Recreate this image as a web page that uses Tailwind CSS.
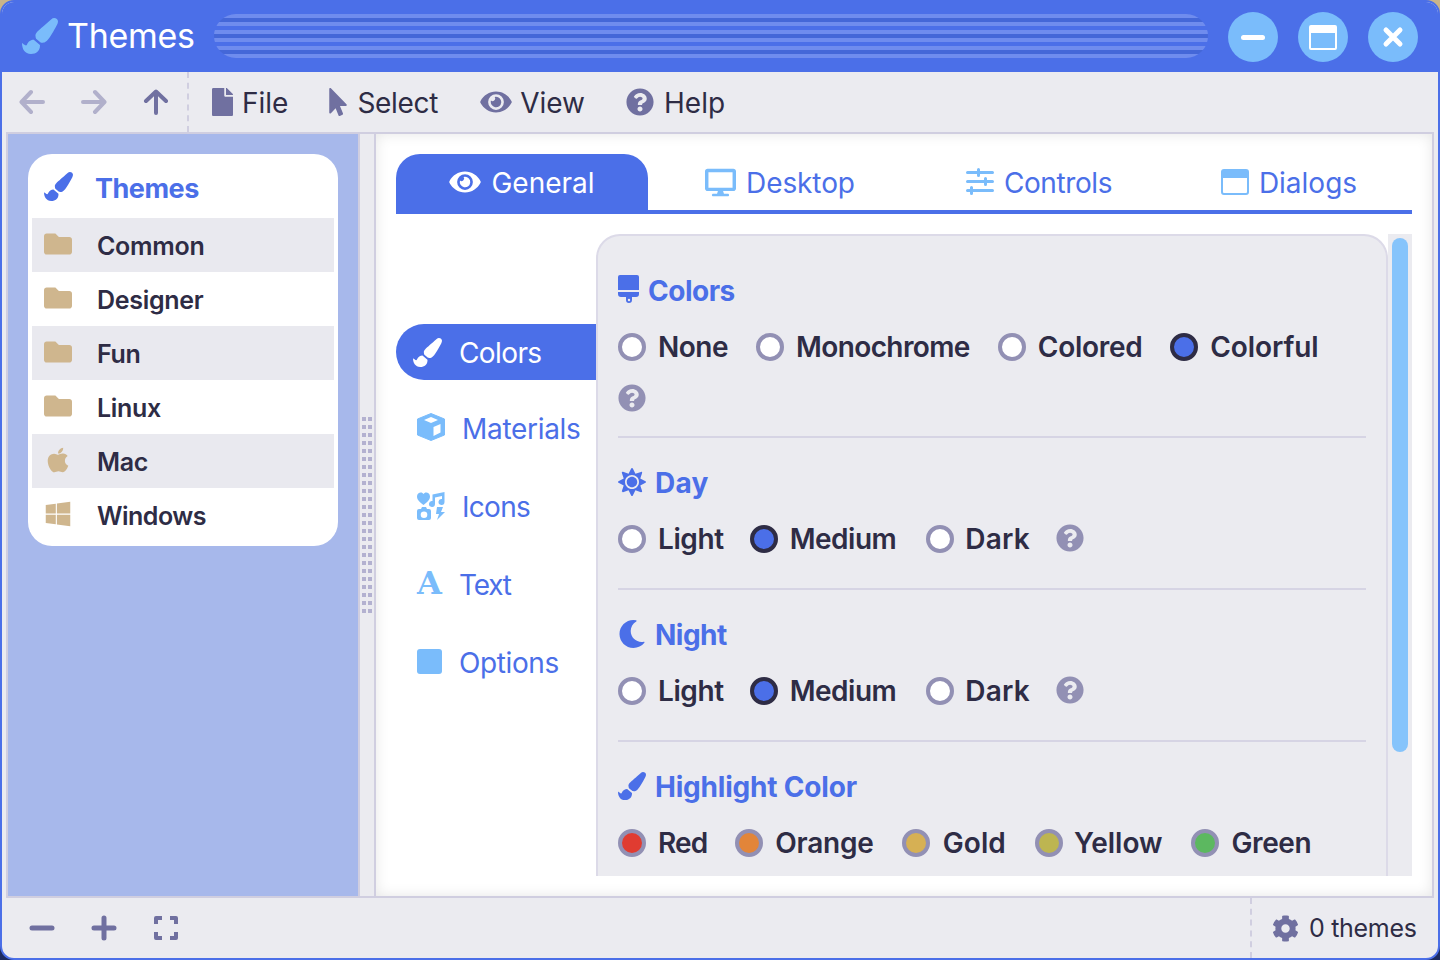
<!DOCTYPE html>
<html lang="en">
<head>
  <meta charset="UTF-8">
  <title>Themes</title>
  <script src="https://cdn.jsdelivr.net/npm/@tailwindcss/browser@4"></script>
</head>
<body class="w-[1440px] h-[960px] overflow-hidden bg-[linear-gradient(#c9b48a_50%,#1c2a5e_50%)] font-[family-name:Inter,sans-serif] text-[#2e2c45]">
  <div class="w-[1440px] h-[960px] flex flex-col border-2 border-[#4b6fe8] rounded-[14px] overflow-hidden bg-[#ebebf0]">

    <!-- Title bar -->
    <header class="h-[72px] shrink-0 bg-[#4b6fe8] flex items-start -mt-[2px]">
      <svg class="w-[36px] h-[36px] ml-[20px] mt-[18px]" viewBox="0 0 512 512" fill="#7abcfb"><path d="M167.02 309.34c-40.12 2.58-76.53 17.86-97.19 72.3-2.35 6.21-8 9.98-14.59 9.98-11.11 0-45.46-27.67-55.25-34.35C0 439.62 37.93 512 128 512c75.86 0 128-43.77 128-120.19 0-3.11-.65-6.08-.97-9.13l-88.01-73.34zM457.89 0c-15.16 0-29.37 6.71-40.21 16.45C213.27 199.05 192 203.34 192 257.09c0 13.7 3.25 26.76 8.73 38.7l63.82 53.18c7.21 1.8 14.64 3.03 22.39 3.03 62.11 0 98.11-45.47 211.16-256.46 7.38-14.35 13.9-29.85 13.9-45.99C512 20.64 486 0 457.89 0z"/></svg>
      <span class="w-[147px] ml-[9px] mt-[14px] text-[34px] leading-[44px] text-white tracking-[-0.3px]">Themes</span>
      <div class="w-[994px] h-[44px] mt-[14px] rounded-[22px] bg-[repeating-linear-gradient(#6f8cee_0px,#6f8cee_4px,#4467d8_4px,#4467d8_8px,#6f8cee_8px,#6f8cee_12px,#4b6fe8_12px,#4b6fe8_16px)]"></div>
      <div class="ml-auto mr-[20px] mt-[12px] flex gap-[20px]">
        <button class="w-[50px] h-[50px] rounded-full bg-[#7abcfb] flex items-center justify-center">
          <span class="block w-[24px] h-[5px] rounded-full bg-white"></span>
        </button>
        <button class="w-[50px] h-[50px] rounded-full bg-[#7abcfb] flex items-center justify-center">
          <span class="block w-[28px] h-[25px] rounded-[2px] border-[2.5px] border-t-[8px] border-white"></span>
        </button>
        <button class="w-[50px] h-[50px] rounded-full bg-[#7abcfb] flex items-center justify-center">
          <svg class="w-[22px] h-[22px]" viewBox="0 0 22 22" fill="none" stroke="#fff" stroke-width="5" stroke-linecap="round"><path d="M4 4l14 14M18 4L4 18"/></svg>
        </button>
      </div>
    </header>

    <!-- Toolbar -->
    <nav class="h-[60px] shrink-0 flex items-center text-[28px]">
      <div class="w-[187px] h-full flex items-center border-r-2 border-dashed border-[#d0cee0]">
        <svg class="w-[26px] h-[26px] ml-[17px]" viewBox="0 0 26 26" fill="none" stroke="#b1b0cb" stroke-width="4" stroke-linecap="round" stroke-linejoin="round"><path d="M24 13H3M12 3L2.500 13 12 23"/></svg>
        <svg class="w-[26px] h-[26px] ml-[36px]" viewBox="0 0 26 26" fill="none" stroke="#b1b0cb" stroke-width="4" stroke-linecap="round" stroke-linejoin="round"><path d="M2 13h21M14 3l9.500 10L14 23"/></svg>
        <svg class="w-[26px] h-[26px] ml-[36px]" viewBox="0 0 26 26" fill="none" stroke="#7070a0" stroke-width="4" stroke-linecap="round" stroke-linejoin="round"><path d="M13 24V3M3 12l10-9.500L23 12"/></svg>
      </div>
      <svg class="w-[21px] h-[28px] ml-[23px]" viewBox="0 0 384 512" fill="#7070a0"><path d="M224 136V0H24C10.7 0 0 10.7 0 24v464c0 13.3 10.7 24 24 24h336c13.3 0 24-10.700 24-24V160H248c-13.200 0-24-10.800-24-24zm160-14.100v6.100H256V0h6.100c6.400 0 12.500 2.500 17 7l97.900 98c4.500 4.500 7 10.600 7 16.900z"/></svg>
      <span class="ml-[9px] pt-[2px]">File</span>
      <svg class="w-[18px] h-[28px] ml-[41px]" viewBox="0 0 320 512" fill="#7070a0"><path d="M302.189 329.126H196.105l55.831 135.993c3.889 9.428-.555 19.999-9.444 23.999l-49.165 21.427c-9.165 4-19.443-.571-23.332-9.714l-53.053-129.136-86.664 89.138C18.729 472.71 0 463.554 0 447.977V18.299C0 1.899 19.921-6.096 30.277 5.443l284.412 292.542c11.472 11.179 3.007 31.141-12.5 31.141z"/></svg>
      <span class="ml-[10px] pt-[2px] tracking-[-0.3px]">Select</span>
      <svg class="w-[32px] h-[28px] ml-[42px]" viewBox="0 0 576 512" fill="#7070a0"><path d="M572.52 241.4C518.29 135.59 410.93 64 288 64S57.68 135.64 3.48 241.41a32.35 32.35 0 0 0 0 29.19C57.71 376.41 165.07 448 288 448s230.32-71.64 284.52-177.41a32.35 32.35 0 0 0 0-29.19zM288 400a144 144 0 1 1 144-144 143.93 143.93 0 0 1-144 144zm0-240a95.31 95.31 0 0 0-25.31 3.79 47.85 47.85 0 0 1-66.9 66.9A95.78 95.78 0 1 0 288 160z"/></svg>
      <span class="ml-[8px] pt-[2px]">View</span>
      <svg class="w-[28px] h-[28px] ml-[41px]" viewBox="0 0 512 512" fill="#7070a0"><path d="M504 256c0 136.997-111.043 248-248 248S8 392.997 8 256C8 119.083 119.043 8 256 8s248 111.083 248 248zM262.655 90c-54.497 0-89.255 22.957-116.549 63.758-3.536 5.286-2.353 12.415 2.715 16.258l34.699 26.31c5.205 3.947 12.621 3.008 16.665-2.122 17.864-22.658 30.113-35.797 57.303-35.797 20.429 0 45.698 13.148 45.698 32.958 0 14.976-12.363 22.667-32.534 33.976C247.128 238.528 216 254.941 216 296v4c0 6.627 5.373 12 12 12h56c6.627 0 12-5.373 12-12v-1.333c0-28.462 83.186-29.647 83.186-106.667 0-58.002-60.165-102-116.531-102zM256 338c-25.365 0-46 20.635-46 46 0 25.364 20.635 46 46 46s46-20.636 46-46c0-25.365-20.635-46-46-46z"/></svg>
      <span class="ml-[10px] pt-[2px]">Help</span>
    </nav>

    <!-- Main -->
    <main class="h-[766px] shrink-0 mx-[4px] border-2 border-[#d0cee0] flex">

      <!-- Sidebar -->
      <aside class="w-[350px] shrink-0 bg-[#a7b8eb] pt-[20px] pl-[20px]">
        <div class="w-[310px] h-[392px] bg-white rounded-[24px] px-[4px] text-[25px] font-semibold tracking-[-0.3px]">
          <div class="h-[64px] flex items-center text-[27px] font-bold text-[#4b6fe8] tracking-[-0.5px]">
            <svg class="w-[29px] h-[29px] ml-[12px]" viewBox="0 0 512 512" fill="#4b6fe8"><path d="M167.02 309.34c-40.12 2.58-76.53 17.86-97.19 72.3-2.35 6.21-8 9.98-14.59 9.98-11.11 0-45.46-27.67-55.25-34.35C0 439.62 37.93 512 128 512c75.86 0 128-43.77 128-120.19 0-3.11-.65-6.08-.97-9.13l-88.01-73.34zM457.89 0c-15.16 0-29.37 6.71-40.21 16.45C213.27 199.05 192 203.34 192 257.09c0 13.7 3.25 26.76 8.73 38.7l63.82 53.18c7.21 1.8 14.64 3.03 22.39 3.03 62.11 0 98.11-45.47 211.16-256.46 7.38-14.35 13.9-29.85 13.9-45.99C512 20.64 486 0 457.89 0z"/></svg>
            <span class="ml-[22px] pt-[6px]">Themes</span>
          </div>
          <div class="h-[54px] flex items-center bg-[#e9e9ef]">
            <svg class="w-[28px] h-[28px] ml-[12px] -mt-[3px]" viewBox="0 0 512 512" fill="#cfb68e"><path d="M464 128H272l-64-64H48C21.49 64 0 85.49 0 112v288c0 26.51 21.49 48 48 48h416c26.51 0 48-21.49 48-48V176c0-26.51-21.49-48-48-48z"/></svg>
            <span class="ml-[25px] pt-[3px]">Common</span>
          </div>
          <div class="h-[54px] flex items-center">
            <svg class="w-[28px] h-[28px] ml-[12px] -mt-[3px]" viewBox="0 0 512 512" fill="#cfb68e"><path d="M464 128H272l-64-64H48C21.49 64 0 85.49 0 112v288c0 26.51 21.49 48 48 48h416c26.51 0 48-21.49 48-48V176c0-26.51-21.49-48-48-48z"/></svg>
            <span class="ml-[25px] pt-[3px]">Designer</span>
          </div>
          <div class="h-[54px] flex items-center bg-[#e9e9ef]">
            <svg class="w-[28px] h-[28px] ml-[12px] -mt-[3px]" viewBox="0 0 512 512" fill="#cfb68e"><path d="M464 128H272l-64-64H48C21.49 64 0 85.49 0 112v288c0 26.51 21.49 48 48 48h416c26.51 0 48-21.49 48-48V176c0-26.51-21.49-48-48-48z"/></svg>
            <span class="ml-[25px] pt-[3px]">Fun</span>
          </div>
          <div class="h-[54px] flex items-center">
            <svg class="w-[28px] h-[28px] ml-[12px] -mt-[3px]" viewBox="0 0 512 512" fill="#cfb68e"><path d="M464 128H272l-64-64H48C21.49 64 0 85.49 0 112v288c0 26.51 21.49 48 48 48h416c26.51 0 48-21.49 48-48V176c0-26.51-21.49-48-48-48z"/></svg>
            <span class="ml-[25px] pt-[3px]">Linux</span>
          </div>
          <div class="h-[54px] flex items-center bg-[#e9e9ef]">
            <svg class="w-[24px] h-[28px] ml-[14px] mr-[2px] -mt-[3px]" viewBox="0 0 384 512" fill="#cfb68e"><path d="M318.7 268.7c-.2-36.7 16.4-64.4 50-84.8-18.8-26.9-47.2-41.7-84.7-44.6-35.5-2.8-74.3 20.7-88.5 20.7-15 0-49.4-19.7-76.4-19.7C63.3 141.2 4 184.8 4 273.5q0 39.3 14.4 81.2c12.8 36.7 59 126.7 107.2 125.2 25.2-.6 43-17.9 75.8-17.9 31.8 0 48.3 17.9 76.4 17.9 48.6-.7 90.4-82.5 102.6-119.3-65.2-30.7-61.7-90-61.7-91.900zm-56.6-164.2c27.3-32.4 24.8-61.9 24-72.5-24.1 1.4-52 16.4-67.9 34.9-17.5 19.8-27.8 44.3-25.6 71.9 26.1 2 49.9-11.4 69.5-34.3z"/></svg>
            <span class="ml-[25px] pt-[3px]">Mac</span>
          </div>
          <div class="h-[54px] flex items-center">
            <svg class="w-[26px] h-[28px] ml-[13px] mr-[1px] -mt-[3px]" viewBox="0 0 448 512" fill="#cfb68e"><path d="M0 93.7l183.6-25.3v177.4H0V93.7zm0 324.6l183.6 25.3V268.4H0v149.9zm203.8 28L448 480V268.4H203.8v177.9zm0-380.6v180.1H448V32L203.8 65.7z"/></svg>
            <span class="ml-[25px] pt-[3px] tracking-[-0.5px]">Windows</span>
          </div>
        </div>
      </aside>

      <!-- Splitter -->
      <div class="w-[18px] shrink-0 border-x-2 border-[#d0cee0] flex items-center justify-center gap-[2px]">
        <div class="w-[4px] h-[196px] bg-[linear-gradient(#b3b1d0_50%,transparent_50%)] bg-[length:4px_8px]"></div>
        <div class="w-[4px] h-[196px] bg-[linear-gradient(#b3b1d0_50%,transparent_50%)] bg-[length:4px_8px]"></div>
      </div>

      <!-- Content -->
      <section class="flex-1 bg-white shadow-[inset_0_0_14px_rgba(0,0,0,0.10)] pt-[20px] px-[20px]">
        <div class="h-[60px] flex border-b-4 border-[#4b6fe8] text-[28px] text-[#4b6fe8]">
          <div class="w-[252px] h-[60px] rounded-t-[24px] bg-[#4b6fe8] text-white flex items-center justify-center gap-[10px] pb-[4px]">
            <svg class="w-[32px] h-[28px]" viewBox="0 0 576 512" fill="#fff"><path d="M572.52 241.4C518.29 135.59 410.93 64 288 64S57.68 135.64 3.48 241.41a32.35 32.35 0 0 0 0 29.19C57.71 376.41 165.07 448 288 448s230.32-71.64 284.52-177.41a32.35 32.35 0 0 0 0-29.19zM288 400a144 144 0 1 1 144-144 143.93 143.93 0 0 1-144 144zm0-240a95.31 95.31 0 0 0-25.31 3.79 47.85 47.85 0 0 1-66.9 66.9A95.78 95.78 0 1 0 288 160z"/></svg>
            <span class="pt-[2px]">General</span>
          </div>
          <div class="w-[264px] flex items-center justify-center gap-[10px]">
            <svg class="w-[31px] h-[29px]" viewBox="0 0 576 512" fill="#7abcfb"><path d="M528 0H48C21.500 0 0 21.500 0 48v320c0 26.500 21.500 48 48 48h192l-16 48h-72c-13.300 0-24 10.700-24 24s10.700 24 24 24h272c13.300 0 24-10.700 24-24s-10.700-24-24-24h-72l-16-48h192c26.500 0 48-21.500 48-48V48c0-26.500-21.500-48-48-48zm-16 352H64V64h448v288z"/></svg>
            <span class="pt-[2px] tracking-[-0.1px]">Desktop</span>
          </div>
          <div class="w-[252px] pl-[2px] flex items-center justify-center gap-[10px]">
            <svg class="w-[28px] h-[28px]" viewBox="0 0 28 28" fill="#7abcfb"><path d="M0 4.500a1.500 1.500 0 0 1 1.500-1.500H11V1.500a1.500 1.500 0 0 1 3 0V3h12.500a1.500 1.500 0 0 1 0 3H14v1.500a1.500 1.500 0 0 1-3 0V6H1.500A1.500 1.500 0 0 1 0 4.500zM0 13.500A1.500 1.500 0 0 1 1.500 12H18v-1.500a1.500 1.500 0 0 1 3 0V12h5.500a1.500 1.500 0 0 1 0 3H21v1.500a1.500 1.500 0 0 1-3 0V15H1.500A1.500 1.500 0 0 1 0 13.500zM0 22.500A1.500 1.500 0 0 1 1.500 21H4v-1.500a1.500 1.500 0 0 1 3 0V21h19.500a1.500 1.500 0 0 1 0 3H7v1.500a1.500 1.500 0 0 1-3 0V24H1.500A1.500 1.500 0 0 1 0 22.500z"/></svg>
            <span class="pt-[2px] tracking-[-0.4px]">Controls</span>
          </div>
          <div class="w-[248px] pl-[2px] flex items-center justify-center gap-[10px]">
            <span class="block w-[28px] h-[26px] rounded-[3px] border-[2.5px] border-t-[9px] border-[#7abcfb]"></span>
            <span class="pt-[2px]">Dialogs</span>
          </div>
        </div>

        <div class="flex mt-[20px]">
          <!-- Nav -->
          <div class="w-[200px] shrink-0 pt-[90px] text-[28px] text-[#4b6fe8]">
            <div class="h-[56px] rounded-l-[28px] bg-[#4b6fe8] text-white flex items-center">
              <svg class="w-[29px] h-[29px] ml-[17px]" viewBox="0 0 512 512" fill="#fff"><path d="M167.02 309.34c-40.12 2.58-76.53 17.86-97.19 72.3-2.35 6.21-8 9.98-14.59 9.98-11.11 0-45.46-27.67-55.25-34.35C0 439.62 37.93 512 128 512c75.86 0 128-43.77 128-120.19 0-3.11-.65-6.08-.97-9.13l-88.01-73.34zM457.89 0c-15.16 0-29.37 6.71-40.21 16.45C213.27 199.05 192 203.34 192 257.09c0 13.7 3.25 26.76 8.73 38.7l63.82 53.18c7.21 1.8 14.64 3.03 22.39 3.03 62.11 0 98.11-45.47 211.16-256.46 7.38-14.35 13.9-29.85 13.9-45.99C512 20.64 486 0 457.89 0z"/></svg>
              <span class="ml-[17px] pt-[2px] tracking-[-0.6px]">Colors</span>
            </div>
            <div class="h-[78px] mt-[9px] flex items-center">
              <svg class="w-[28px] h-[28px] ml-[21px] -mt-[2px]" viewBox="0 0 28 28" fill="#7abcfb"><path d="M14 0.500L27.500 6v16L14 27.500 0.500 22V6z" stroke="#7abcfb" stroke-width="1" stroke-linejoin="round"/><path d="M14 4L21 7 14 10 7 7z" fill="#fff"/><path d="M16.500 14L23.500 11v8.500L16.500 23z" fill="#fff"/></svg>
              <span class="ml-[17px] pt-[2px] tracking-[-0.3px]">Materials</span>
            </div>
            <div class="h-[78px] flex items-center">
              <svg class="w-[28px] h-[28px] ml-[21px]" viewBox="0 0 28 28" fill="#7abcfb"><path d="M6.500 13C3 10 0 8 0 4.500 0 2 2 0.500 3.800 0.500c1.200 0 2.200.6 2.700 1.500C7 1.100 8 0.500 9.200 0.500 11 0.500 13 2 13 4.500 13 8 10 10 6.500 13z"/><path d="M27.500 0v10a3 3 0 1 1-2.500-3V4l-7 1.500V12a3 3 0 1 1-2.500-3V2.500z"/><path d="M2 17h2l1-2h4l1 2h2a2 2 0 0 1 2 2v7a2 2 0 0 1-2 2H2a2 2 0 0 1-2-2v-7a2 2 0 0 1 2-2zm5 2.500a3.300 3.300 0 1 0 0 6.600 3.300 3.300 0 0 0 0-6.600z"/><path d="M20 15h6l-2 5h4l-8 8 2-6h-3z"/></svg>
              <span class="ml-[17px] pt-[2px] tracking-[-0.7px]">Icons</span>
            </div>
            <div class="h-[78px] flex items-center">
              <span class="w-[26px] ml-[21px] text-[32px] leading-none font-bold text-[#7abcfb] font-[family-name:'DejaVu_Serif',serif] -mt-[2px]">A</span>
              <span class="ml-[16px] pt-[2px] tracking-[-1.2px]">Text</span>
            </div>
            <div class="h-[78px] flex items-center">
              <span class="block w-[25px] h-[25px] ml-[21px] rounded-[3px] bg-[#7abcfb] -mt-[2px]"></span>
              <span class="ml-[17px] pt-[2px] tracking-[-0.4px]">Options</span>
            </div>
          </div>

          <!-- Panel -->
          <div class="w-[792px] h-[642px] overflow-hidden rounded-t-[24px] border-2 border-b-0 border-[#dcdae8] bg-[#ebebf0] pl-[20px] pr-[20px] text-[28px] font-semibold">
            <div class="pt-[36px] pb-[24px] border-b-2 border-[#d6d4e4]">
              <div class="h-[36px] flex items-center text-[#4b6fe8] font-bold">
                <svg class="w-[21px] h-[28px] -mt-[2px]" viewBox="0 0 21 28" fill="#4b6fe8"><path d="M2 0h17a2 2 0 0 1 2 2v13H0V2a2 2 0 0 1 2-2z"/><path d="M0 17h21v2a3 3 0 0 1-3 3h-4v3a3 3 0 0 1-6 0v-3H3a3 3 0 0 1-3-3z"/><circle cx="11" cy="25" r="1.200" fill="#ebebf0"/></svg>
                <span class="ml-[9px] pt-[2px] tracking-[-0.5px]">Colors</span>
              </div>
              <div class="mt-[25px] flex flex-wrap items-center gap-x-[28px] gap-y-[23px]">
                <label class="flex items-center gap-[12px] h-[28px] tracking-[-0.5px]"><span class="block w-[28px] h-[28px] rounded-full border-4 border-[#9290b4] bg-white"></span>None</label>
                <label class="flex items-center gap-[12px] h-[28px] tracking-[-0.6px]"><span class="block w-[28px] h-[28px] rounded-full border-4 border-[#9290b4] bg-white"></span>Monochrome</label>
                <label class="flex items-center gap-[12px] h-[28px] tracking-[-0.3px]"><span class="block w-[28px] h-[28px] rounded-full border-4 border-[#9290b4] bg-white"></span>Colored</label>
                <label class="flex items-center gap-[12px] h-[28px] tracking-[-0.1px]"><span class="block w-[28px] h-[28px] rounded-full border-4 border-[#2e2c45] bg-[#4b6fe8]"></span>Colorful</label>
                <div class="w-full h-[28px]">
                  <svg class="w-[28px] h-[28px]" viewBox="0 0 512 512" fill="#9290b4"><path d="M504 256c0 136.997-111.043 248-248 248S8 392.997 8 256C8 119.083 119.043 8 256 8s248 111.083 248 248zM262.655 90c-54.497 0-89.255 22.957-116.549 63.758-3.536 5.286-2.353 12.415 2.715 16.258l34.699 26.31c5.205 3.947 12.621 3.008 16.665-2.122 17.864-22.658 30.113-35.797 57.303-35.797 20.429 0 45.698 13.148 45.698 32.958 0 14.976-12.363 22.667-32.534 33.976C247.128 238.528 216 254.941 216 296v4c0 6.627 5.373 12 12 12h56c6.627 0 12-5.373 12-12v-1.333c0-28.462 83.186-29.647 83.186-106.667 0-58.002-60.165-102-116.531-102zM256 338c-25.365 0-46 20.635-46 46 0 25.364 20.635 46 46 46s46-20.636 46-46c0-25.365-20.635-46-46-46z"/></svg>
                </div>
              </div>
            </div>

            <div class="pt-[27px] pb-[35px] border-b-2 border-[#d6d4e4]">
              <div class="h-[36px] flex items-center text-[#4b6fe8] font-bold">
                <svg class="w-[28px] h-[28px] -mt-[2px]" viewBox="0 0 512 512" fill="#4b6fe8"><path d="M256 160c-52.900 0-96 43.100-96 96s43.100 96 96 96 96-43.100 96-96-43.100-96-96-96zm246.400 80.500l-94.700-47.300 33.500-100.400c4.500-13.600-8.400-26.500-21.900-21.900l-100.400 33.500-47.400-94.800c-6.400-12.800-24.600-12.800-31 0l-47.300 94.700L92.700 70.800c-13.600-4.500-26.500 8.400-21.900 21.900l33.500 100.400-94.700 47.400c-12.800 6.400-12.800 24.600 0 31l94.700 47.300-33.500 100.500c-4.500 13.600 8.400 26.500 21.900 21.900l100.400-33.500 47.300 94.700c6.400 12.800 24.600 12.800 31 0l47.300-94.700 100.400 33.500c13.600 4.500 26.500-8.400 21.900-21.900l-33.500-100.400 94.700-47.300c13-6.500 13-24.700.2-31.100zm-155.900 106c-49.900 49.900-131.100 49.900-181 0-49.900-49.900-49.900-131.100 0-181 49.900-49.900 131.100-49.900 181 0 49.900 49.900 49.900 131.100 0 181z"/></svg>
                <span class="ml-[9px] tracking-[0.2px]">Day</span>
              </div>
              <div class="mt-[24px] flex items-center gap-x-[26px]">
                <label class="flex items-center gap-[12px] h-[28px] tracking-[-0.4px]"><span class="block w-[28px] h-[28px] rounded-full border-4 border-[#9290b4] bg-white"></span>Light</label>
                <label class="flex items-center gap-[12px] h-[28px] tracking-[-0.5px]"><span class="block w-[28px] h-[28px] rounded-full border-4 border-[#2e2c45] bg-[#4b6fe8]"></span>Medium</label>
                <label class="flex items-center gap-[11px] h-[28px] ml-[4px] tracking-[0.2px]"><span class="block w-[28px] h-[28px] rounded-full border-4 border-[#9290b4] bg-white"></span>Dark</label>
                <svg class="w-[28px] h-[28px] -mt-[2px]" viewBox="0 0 512 512" fill="#9290b4"><path d="M504 256c0 136.997-111.043 248-248 248S8 392.997 8 256C8 119.083 119.043 8 256 8s248 111.083 248 248zM262.655 90c-54.497 0-89.255 22.957-116.549 63.758-3.536 5.286-2.353 12.415 2.715 16.258l34.699 26.31c5.205 3.947 12.621 3.008 16.665-2.122 17.864-22.658 30.113-35.797 57.303-35.797 20.429 0 45.698 13.148 45.698 32.958 0 14.976-12.363 22.667-32.534 33.976C247.128 238.528 216 254.941 216 296v4c0 6.627 5.373 12 12 12h56c6.627 0 12-5.373 12-12v-1.333c0-28.462 83.186-29.647 83.186-106.667 0-58.002-60.165-102-116.531-102zM256 338c-25.365 0-46 20.635-46 46 0 25.364 20.635 46 46 46s46-20.636 46-46c0-25.365-20.635-46-46-46z"/></svg>
              </div>
            </div>

            <div class="pt-[27px] pb-[35px] border-b-2 border-[#d6d4e4]">
              <div class="h-[36px] flex items-center text-[#4b6fe8] font-bold">
                <svg class="w-[28px] h-[28px] -mt-[2px]" viewBox="0 0 512 512" fill="#4b6fe8"><path d="M283.211 512c78.962 0 151.079-35.925 198.857-94.792 7.068-8.708-.639-21.43-11.562-19.35-124.203 23.654-238.262-71.576-238.262-196.954 0-72.222 38.662-138.635 101.498-174.394 9.686-5.512 7.25-20.197-3.756-22.23A258.156 258.156 0 0 0 283.211 0c-141.309 0-256 114.511-256 256 0 141.309 114.511 256 256 256z"/></svg>
                <span class="ml-[9px] tracking-[-0.5px]">Night</span>
              </div>
              <div class="mt-[24px] flex items-center gap-x-[26px]">
                <label class="flex items-center gap-[12px] h-[28px] tracking-[-0.4px]"><span class="block w-[28px] h-[28px] rounded-full border-4 border-[#9290b4] bg-white"></span>Light</label>
                <label class="flex items-center gap-[12px] h-[28px] tracking-[-0.5px]"><span class="block w-[28px] h-[28px] rounded-full border-4 border-[#2e2c45] bg-[#4b6fe8]"></span>Medium</label>
                <label class="flex items-center gap-[11px] h-[28px] ml-[4px] tracking-[0.2px]"><span class="block w-[28px] h-[28px] rounded-full border-4 border-[#9290b4] bg-white"></span>Dark</label>
                <svg class="w-[28px] h-[28px] -mt-[2px]" viewBox="0 0 512 512" fill="#9290b4"><path d="M504 256c0 136.997-111.043 248-248 248S8 392.997 8 256C8 119.083 119.043 8 256 8s248 111.083 248 248zM262.655 90c-54.497 0-89.255 22.957-116.549 63.758-3.536 5.286-2.353 12.415 2.715 16.258l34.699 26.31c5.205 3.947 12.621 3.008 16.665-2.122 17.864-22.658 30.113-35.797 57.303-35.797 20.429 0 45.698 13.148 45.698 32.958 0 14.976-12.363 22.667-32.534 33.976C247.128 238.528 216 254.941 216 296v4c0 6.627 5.373 12 12 12h56c6.627 0 12-5.373 12-12v-1.333c0-28.462 83.186-29.647 83.186-106.667 0-58.002-60.165-102-116.531-102zM256 338c-25.365 0-46 20.635-46 46 0 25.364 20.635 46 46 46s46-20.636 46-46c0-25.365-20.635-46-46-46z"/></svg>
              </div>
            </div>

            <div class="pt-[27px]">
              <div class="h-[36px] flex items-center text-[#4b6fe8] font-bold">
                <svg class="w-[28px] h-[28px] -mt-[2px]" viewBox="0 0 512 512" fill="#4b6fe8"><path d="M167.02 309.34c-40.12 2.58-76.53 17.86-97.19 72.3-2.35 6.21-8 9.98-14.59 9.98-11.11 0-45.46-27.67-55.25-34.35C0 439.62 37.93 512 128 512c75.86 0 128-43.77 128-120.19 0-3.11-.65-6.08-.97-9.13l-88.01-73.34zM457.89 0c-15.16 0-29.37 6.71-40.21 16.45C213.27 199.05 192 203.34 192 257.09c0 13.7 3.25 26.76 8.73 38.7l63.82 53.18c7.21 1.8 14.64 3.03 22.39 3.03 62.11 0 98.11-45.47 211.16-256.46 7.38-14.35 13.9-29.85 13.9-45.99C512 20.64 486 0 457.89 0z"/></svg>
                <span class="ml-[9px] tracking-[-0.2px]">Highlight Color</span>
              </div>
              <div class="mt-[24px] flex items-center gap-x-[28px]">
                <label class="flex items-center gap-[12px] h-[28px] tracking-[-0.9px]"><span class="block w-[28px] h-[28px] rounded-full border-4 border-[#9290b4] bg-[#e03c31]"></span>Red</label>
                <label class="flex items-center gap-[12px] h-[28px] tracking-[-0.2px]"><span class="block w-[28px] h-[28px] rounded-full border-4 border-[#9290b4] bg-[#e28539]"></span>Orange</label>
                <label class="flex items-center gap-[13px] h-[28px] tracking-[0.1px]"><span class="block w-[28px] h-[28px] rounded-full border-4 border-[#9290b4] bg-[#d6b054]"></span>Gold</label>
                <label class="flex items-center gap-[11px] h-[28px] ml-[1px]"><span class="block w-[28px] h-[28px] rounded-full border-4 border-[#9290b4] bg-[#bdb551]"></span>Yellow</label>
                <label class="flex items-center gap-[13px] h-[28px] tracking-[-0.4px]"><span class="block w-[28px] h-[28px] rounded-full border-4 border-[#9290b4] bg-[#5cb860]"></span>Green</label>
              </div>
            </div>
          </div>

          <!-- Scrollbar -->
          <div class="w-[24px] h-[642px] bg-[#ebebf0] pt-[4px] px-[4px]">
            <div class="w-[16px] h-[514px] rounded-full bg-[#86c4fb]"></div>
          </div>
        </div>
      </section>
    </main>

    <!-- Footer -->
    <footer class="h-[60px] shrink-0 flex items-center">
      <svg class="w-[26px] h-[26px] ml-[27px]" viewBox="0 0 26 26" fill="none" stroke="#7070a0" stroke-width="5" stroke-linecap="round"><path d="M3 13h20"/></svg>
      <svg class="w-[26px] h-[26px] ml-[36px]" viewBox="0 0 26 26" fill="none" stroke="#7070a0" stroke-width="5" stroke-linecap="round"><path d="M3 13h20M13 3v20"/></svg>
      <svg class="w-[26px] h-[26px] ml-[36px]" viewBox="0 0 26 26" fill="none" stroke="#7070a0" stroke-width="4" stroke-linejoin="round"><path d="M9 3H3v6M17 3h6v6M9 23H3v-6M17 23h6v-6"/></svg>
      <div class="ml-auto w-[188px] h-full flex items-center border-l-2 border-dashed border-[#d0cee0] text-[25px] tracking-[-0.3px]">
        <svg class="w-[27px] h-[27px] ml-[20px]" viewBox="0 0 512 512" fill="#7070a0"><path d="M487.400 315.700l-42.600-24.600c4.300-23.200 4.300-47 0-70.200l42.600-24.600c4.900-2.800 7.100-8.600 5.500-14-11.100-35.600-30-67.800-54.700-94.600-3.800-4.100-10-5.100-14.800-2.300L380.800 110c-17.900-15.400-38.500-27.300-60.800-35.100V25.800c0-5.600-3.900-10.500-9.400-11.700-36.700-8.200-74.300-7.800-109.200 0-5.500 1.200-9.400 6.100-9.400 11.700V75c-22.200 7.900-42.800 19.800-60.800 35.100L88.700 85.500c-4.900-2.800-11-1.900-14.800 2.300-24.700 26.700-43.600 58.900-54.700 94.600-1.700 5.400.6 11.200 5.500 14L67.300 221c-4.300 23.200-4.300 47 0 70.200l-42.600 24.600c-4.900 2.800-7.100 8.600-5.500 14 11.100 35.600 30 67.800 54.700 94.600 3.800 4.100 10 5.100 14.800 2.300l42.600-24.600c17.900 15.400 38.500 27.300 60.800 35.100v49.200c0 5.600 3.900 10.500 9.400 11.700 36.700 8.200 74.300 7.800 109.200 0 5.500-1.200 9.400-6.100 9.400-11.700v-49.200c22.200-7.900 42.800-19.800 60.800-35.100l42.600 24.600c4.900 2.800 11 1.900 14.800-2.300 24.700-26.700 43.600-58.900 54.700-94.600 1.500-5.500-.7-11.300-5.600-14.100zM256 336c-44.100 0-80-35.900-80-80s35.900-80 80-80 80 35.900 80 80-35.900 80-80 80z"/></svg>
        <span class="ml-[10px] pt-[2px]">0 themes</span>
      </div>
    </footer>
  </div>
</body>
</html>
